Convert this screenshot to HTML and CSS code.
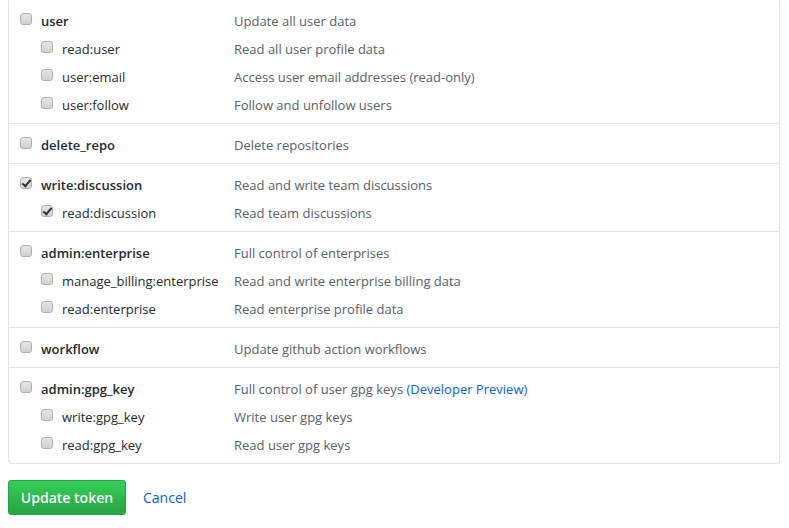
FILE: index.html
```html
<!DOCTYPE html>
<html lang="en">
<head>
<meta charset="utf-8">
<title>Scopes</title>
<link rel="stylesheet" href="styles.css">
</head>
<body>
<div class="scopes">
  <div class="group">
    <label class="row"><span class="name top"><input type="checkbox" class="cb"><span class="lbl strong">user</span></span><span class="desc">Update all user data</span></label>
    <label class="row"><span class="name sub"><input type="checkbox" class="cb"><span class="lbl">read:user</span></span><span class="desc">Read all user profile data</span></label>
    <label class="row"><span class="name sub"><input type="checkbox" class="cb"><span class="lbl">user:email</span></span><span class="desc">Access user email addresses (read-only)</span></label>
    <label class="row"><span class="name sub"><input type="checkbox" class="cb"><span class="lbl">user:follow</span></span><span class="desc">Follow and unfollow users</span></label>
  </div>
  <div class="group">
    <label class="row"><span class="name top"><input type="checkbox" class="cb"><span class="lbl strong">delete_repo</span></span><span class="desc">Delete repositories</span></label>
  </div>
  <div class="group">
    <label class="row"><span class="name top"><input type="checkbox" class="cb" checked><span class="lbl strong">write:discussion</span></span><span class="desc">Read and write team discussions</span></label>
    <label class="row"><span class="name sub"><input type="checkbox" class="cb" checked><span class="lbl">read:discussion</span></span><span class="desc">Read team discussions</span></label>
  </div>
  <div class="group">
    <label class="row"><span class="name top"><input type="checkbox" class="cb"><span class="lbl strong">admin:enterprise</span></span><span class="desc">Full control of enterprises</span></label>
    <label class="row"><span class="name sub"><input type="checkbox" class="cb"><span class="lbl">manage_billing:enterprise</span></span><span class="desc">Read and write enterprise billing data</span></label>
    <label class="row"><span class="name sub"><input type="checkbox" class="cb"><span class="lbl">read:enterprise</span></span><span class="desc">Read enterprise profile data</span></label>
  </div>
  <div class="group">
    <label class="row"><span class="name top"><input type="checkbox" class="cb"><span class="lbl strong">workflow</span></span><span class="desc">Update github action workflows</span></label>
  </div>
  <div class="group">
    <label class="row"><span class="name top"><input type="checkbox" class="cb"><span class="lbl strong">admin:gpg_key</span></span><span class="desc">Full control of user gpg keys <a class="link" href="#">(Developer Preview)</a></span></label>
    <label class="row"><span class="name sub"><input type="checkbox" class="cb"><span class="lbl">write:gpg_key</span></span><span class="desc">Write user gpg keys</span></label>
    <label class="row"><span class="name sub"><input type="checkbox" class="cb"><span class="lbl">read:gpg_key</span></span><span class="desc">Read user gpg keys</span></label>
  </div>
</div>
<div class="actions">
  <button class="btn-primary" type="button">Update token</button>
  <a class="cancel" href="#">Cancel</a>
</div>
</body>
</html>
```
FILE: styles.css
```css
html, body {
  margin: 0;
  padding: 0;
  background: #fff;
}
body {
  padding: 0 9px 0 8px;
  font-family: "Segoe UI", "Open Sans", "Liberation Sans", sans-serif;
  font-size: 13px;
  color: #24292e;
}
.scopes {
  margin-top: -1px;
  border: 1px solid #e1e4e8;
  border-radius: 3px;
}
.group {
  padding: 0 0 4px 11px;
}
.group + .group {
  border-top: 1px solid #e1e4e8;
  padding-top: 7px;
}
.group:first-child {
  padding-top: 7px;
}
.row {
  display: grid;
  grid-template-columns: 214px 1fr;
  align-items: center;
  height: 28px;
}
.name {
  display: flex;
  align-items: center;
}
.name.sub {
  padding-left: 21px;
}
.cb {
  -webkit-appearance: none;
  appearance: none;
  position: relative;
  width: 12px;
  height: 12px;
  margin: -4px 9px 0 0;
  border: 1px solid #b0b0b0;
  border-radius: 3px;
  background: linear-gradient(#e6e6e6, #d2d2d2);
  flex: none;
}
.cb:checked::after {
  content: "";
  position: absolute;
  left: 3px;
  top: 0px;
  width: 3px;
  height: 7px;
  border: solid #333;
  border-width: 0 2px 2px 0;
  transform: rotate(40deg);
}
.lbl {
  color: #24292e;
  white-space: nowrap;
}
.strong {
  font-weight: 600;
}
.desc {
  color: #586069;
  white-space: nowrap;
}
.link {
  color: #0366d6;
  text-decoration: none;
}
.actions {
  display: flex;
  align-items: center;
  margin-top: 16px;
}
.btn-primary {
  height: 35px;
  width: 118px;
  padding: 0;
  border: 1px solid #25a244;
  border-radius: 3px;
  background: linear-gradient(#34d058, #28a745 90%);
  color: #fff;
  font-family: inherit;
  font-size: 14px;
  font-weight: 600;
}
.cancel {
  margin-left: 17px;
  color: #0366d6;
  text-decoration: none;
  font-size: 14px;
}
```
